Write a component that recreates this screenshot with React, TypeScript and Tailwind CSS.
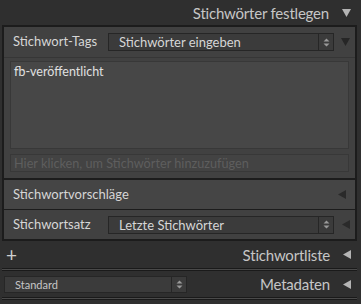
import React from "react";

// Small triangle glyphs used for panel disclosure
function TriDown({ className = "" }: { className?: string }) {
	return (
		<svg width="9" height="8" viewBox="0 0 9 8" className={ className }>
			<path d="M0 0 H9 L4.5 8 Z" fill="currentColor" />
		</svg>
	);
}

function TriLeft({ className = "" }: { className?: string }) {
	return (
		<svg width="8" height="9" viewBox="0 0 8 9" className={ className }>
			<path d="M8 0 V9 L0 4.5 Z" fill="currentColor" />
		</svg>
	);
}

// Up/down stepper box of a popup menu
function Stepper() {
	return (
		<div className="flex h-full w-[15px] items-center justify-center border-l border-[#262626]">
			<svg width="7" height="9" viewBox="0 0 7 9">
				<path d="M0.5 3.5 L3.5 0.5 L6.5 3.5 Z M0.5 5.5 L3.5 8.5 L6.5 5.5 Z" fill="#9a9a9a" />
			</svg>
		</div>
	);
}

function Popup({ label }: { label: string }) {
	return (
		<div className="flex h-[18px] w-[226px] items-center border border-[#262626] bg-[#3b3b3b]">
			<span className="flex-1 pl-[10px] text-[13px] leading-[16px] whitespace-nowrap text-[#d6d6d6]">{ label }</span>
			<Stepper />
		</div>
	);
}

export default function App() {
	return (
		<div className="flex h-[304px] w-[361px] flex-col overflow-hidden bg-[#2f2f2f] font-['Lato',sans-serif] select-none">

			{/* Panel header */}
			<div className="flex h-[25px] shrink-0 items-center justify-end pr-[10px]">
				<span className="text-[15px] leading-[20px] tracking-[-0.2px] text-[#c6c6c6]">Stichwörter festlegen</span>
				<TriDown className="ml-[13px] text-[#b4b4b4]" />
			</div>

			{/* Keywording panel */}
			<div className="ml-[2px] w-[355px] shrink-0 border-2 border-[#1c1c1c] bg-[#414141]">

				{/* Keyword tags row */}
				<div className="flex h-[31px] items-center border-b border-[#363636] pl-[9px]">
					<span className="w-[95px] text-[13px] text-[#d6d6d6]">Stichwort-Tags</span>
					<Popup label="Stichwörter eingeben" />
					<TriDown className="ml-[7px] text-[#262626]" />
				</div>

				{/* Keyword text area */}
				<div className="flex flex-col gap-[5px] px-[6px] pt-[3px] pb-[6px]">
					<div className="h-[88px] border border-[#383838] bg-[#474747] px-[3px] pt-[2px]">
						<div className="text-[12.5px] leading-[16px] text-[#e0e0e0]">fb-veröffentlicht</div>
					</div>
					<div className="flex h-[18px] items-center border border-[#383838] bg-[#434343] px-[3px]">
						<span className="text-[12.7px] leading-[16px] whitespace-nowrap text-[#5e5e5e]">Hier klicken, um Stichwörter hinzuzufügen</span>
					</div>
				</div>

				{/* Suggestions row */}
				<div className="flex h-[31px] items-center justify-between border-t-2 border-[#1c1c1c] bg-[#454545] px-[9px]">
					<span className="text-[13px] text-[#d6d6d6]">Stichwortvorschläge</span>
					<TriLeft className="text-[#2a2a2a]" />
				</div>

				{/* Keyword set row */}
				<div className="flex h-[30px] items-center border-t border-[#1c1c1c] bg-[#414141] pl-[9px]">
					<span className="w-[95px] text-[13px] text-[#d6d6d6]">Stichwortsatz</span>
					<Popup label="Letzte Stichwörter" />
					<TriLeft className="ml-[8px] text-[#2a2a2a]" />
				</div>
			</div>

			{/* Keyword list header */}
			<div className="flex h-[27px] shrink-0 items-center justify-between pr-[10px] pl-[6px]">
				<span className="text-[19px] leading-[20px] text-[#cfcfcf]">+</span>
				<div className="flex items-center">
					<span className="text-[15px] leading-[20px] tracking-[-0.2px] text-[#c6c6c6]">Stichwortliste</span>
					<TriLeft className="ml-[13px] text-[#b4b4b4]" />
				</div>
			</div>
			<div className="ml-[2px] h-[3px] w-[355px] shrink-0 border-y border-[#1a1a1a] bg-[#4a4a4a]" />

			{/* Metadata header */}
			<div className="flex h-[26px] shrink-0 items-center justify-between pr-[10px] pl-[4px]">
				<div className="flex h-[17px] w-[183px] items-center border border-[#262626] bg-[#3b3b3b]">
					<span className="flex-1 pl-[10px] text-[11px] leading-[15px] text-[#c6c6c6]">Standard</span>
					<Stepper />
				</div>
				<div className="flex items-center">
					<span className="text-[15px] leading-[20px] tracking-[-0.2px] text-[#c6c6c6]">Metadaten</span>
					<TriLeft className="ml-[13px] text-[#b4b4b4]" />
				</div>
			</div>
			<div className="ml-[2px] h-[3px] w-[355px] shrink-0 border-y border-[#1a1a1a] bg-[#4a4a4a]" />
		</div>
	);
}
